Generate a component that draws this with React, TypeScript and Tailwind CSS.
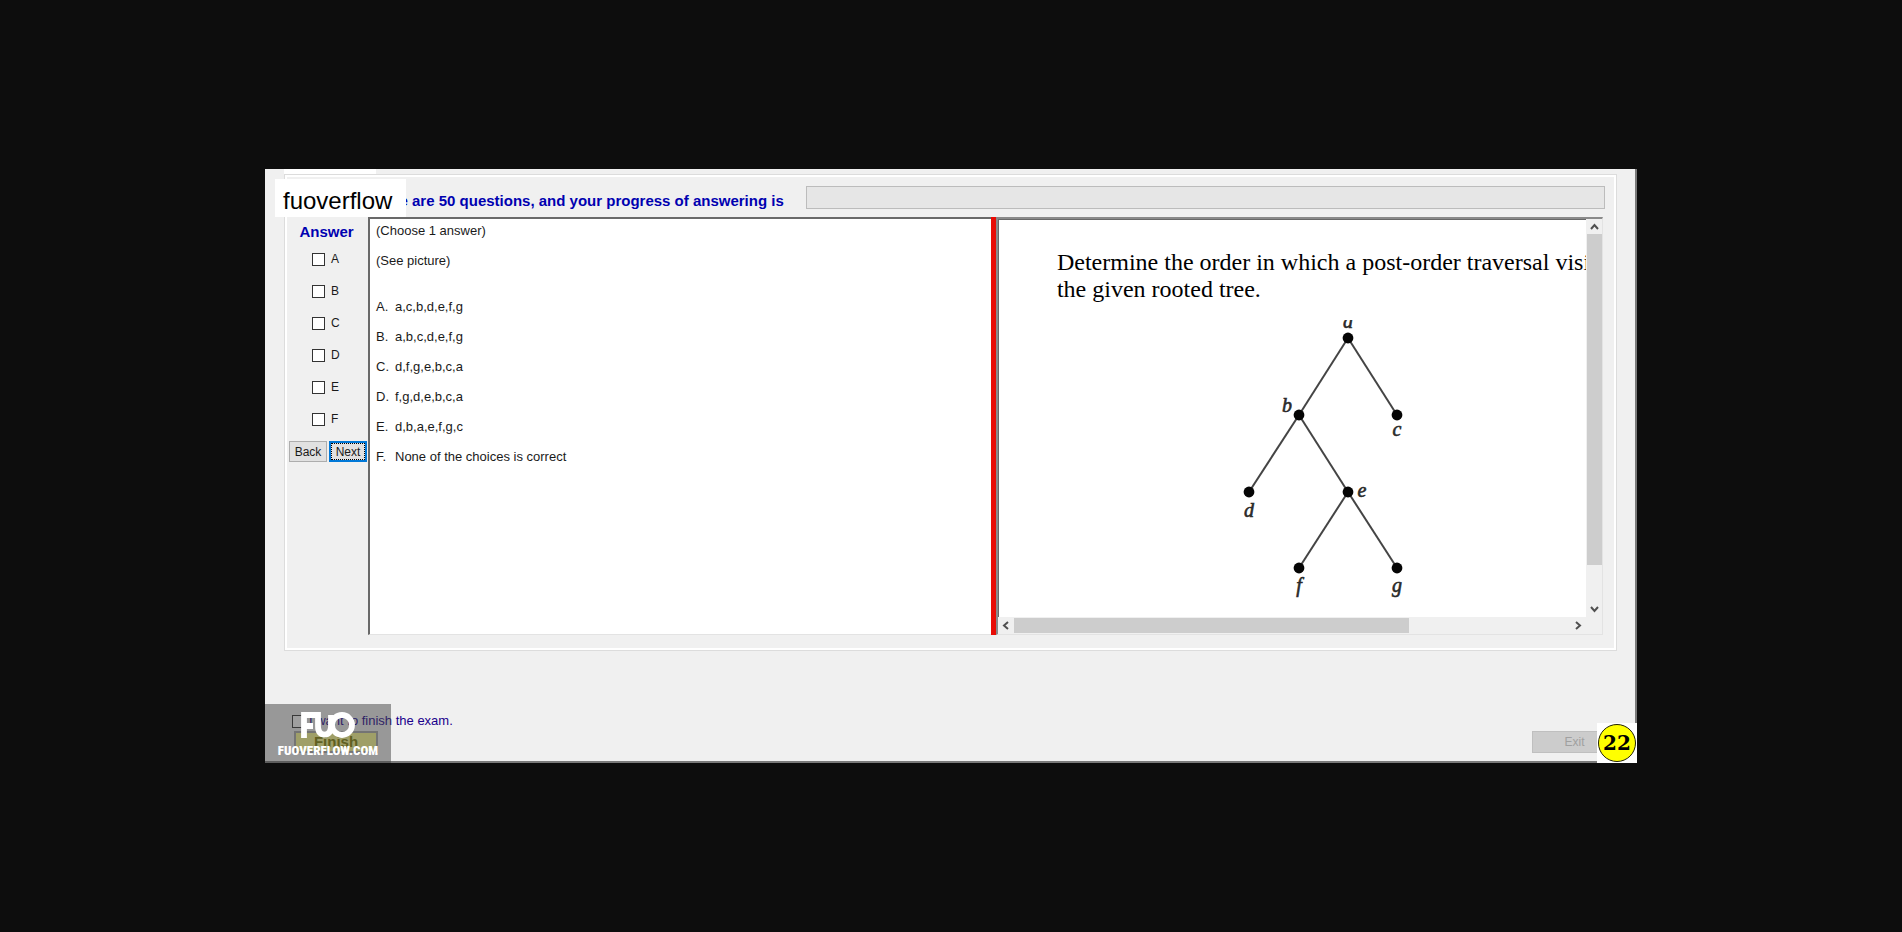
import React from "react";

const CHOICES = ["A", "B", "C", "D", "E", "F"];

const OPTIONS = [
  "a,c,b,d,e,f,g",
  "a,b,c,d,e,f,g",
  "d,f,g,e,b,c,a",
  "f,g,d,e,b,c,a",
  "d,b,a,e,f,g,c",
  "None of the choices is correct",
];

const NODES = [
  { id: "a", x: 116, y: 18, lx: 116, ly: 8 },
  { id: "b", x: 67, y: 95, lx: 55, ly: 92 },
  { id: "c", x: 165, y: 95, lx: 165, ly: 116 },
  { id: "d", x: 17, y: 172, lx: 17, ly: 197 },
  { id: "e", x: 116, y: 172, lx: 130, ly: 177 },
  { id: "f", x: 67, y: 248, lx: 67, ly: 272 },
  { id: "g", x: 165, y: 248, lx: 165, ly: 272 },
];

const EDGES = [
  [0, 1],
  [0, 2],
  [1, 3],
  [1, 4],
  [4, 5],
  [4, 6],
];

function Tree() {
  return (
    <svg width="200" height="283" viewBox="0 0 200 283" role="img" aria-label="Rooted tree">
      {EDGES.map(([from, to]) => (
        <line
          key={`${from}-${to}`}
          x1={NODES[from].x}
          y1={NODES[from].y}
          x2={NODES[to].x}
          y2={NODES[to].y}
          stroke="#444"
          strokeWidth="2"
        />
      ))}
      {NODES.map((n) => (
        <g key={n.id}>
          <circle cx={n.x} cy={n.y} r="5.4" fill="#050505" />
          <text
            x={n.lx}
            y={n.ly}
            textAnchor="middle"
            fontFamily="Liberation Serif, serif"
            fontStyle="italic"
            fontSize="20"
            fill="#2a2a2a"
            stroke="#2a2a2a"
            strokeWidth="0.6"
          >
            {n.id}
          </text>
        </g>
      ))}
    </svg>
  );
}

function Chevron({ d }: { d: string }) {
  return (
    <svg width="9" height="9" viewBox="0 0 9 9" fill="none" stroke="#505050" strokeWidth="2" aria-hidden="true">
      <path d={d} />
    </svg>
  );
}

const scrollButton = "flex size-[15px] shrink-0 items-center justify-center bg-[#f0f0f0]";

function PicturePane() {
  return (
    <section className="flex min-w-0 flex-[609] flex-col border-t-2 border-r border-b border-l-2 border-t-[#8a8a8a] border-r-[#e3e3e3] border-b-[#e3e3e3] border-l-[#8a8a8a] bg-[#f0f0f0]">
      <div className="flex min-h-0 flex-1">
        <div className="min-w-0 flex-1 overflow-hidden border-t border-l border-[#696969] bg-white pt-[29px] pl-[58px]">
          <p className="w-[620px] font-['Liberation_Serif',serif] text-[24px] leading-[27px] text-black">
            Determine the order in which a post-order traversal visits
            <br />
            the given rooted tree.
          </p>
          <div className="mt-[17px] ml-[175px]">
            <Tree />
          </div>
        </div>
        <div className="flex w-[16px] flex-col items-center">
          <button type="button" aria-label="Scroll up" className={scrollButton}>
            <Chevron d="M1 7 L4.500 3 L8 7" />
          </button>
          <div className="w-[15px] flex-1">
            <div className="h-[90%] bg-[#cdcdcd]" />
          </div>
          <button type="button" aria-label="Scroll down" className={scrollButton}>
            <Chevron d="M1 2 L4.500 6 L8 2" />
          </button>
        </div>
      </div>
      <div className="flex h-[17px] items-center pr-[17px] pl-px">
        <button type="button" aria-label="Scroll left" className={scrollButton}>
          <Chevron d="M6 1 L2 4.500 L6 8" />
        </button>
        <div className="h-[15px] flex-1">
          <div className="h-full w-[71%] bg-[#cdcdcd]" />
        </div>
        <button type="button" aria-label="Scroll right" className={scrollButton}>
          <Chevron d="M3 1 L7 4.500 L3 8" />
        </button>
      </div>
    </section>
  );
}

const checkbox = "size-[13px] shrink-0 appearance-none border border-[#333] bg-white";

export default function App() {
  return (
    <main className="flex min-h-screen items-center justify-center bg-[#0d0d0d] font-['Liberation_Sans',sans-serif] text-[13px] text-[#1a1a1a]">
      <div className="relative w-full max-w-[1372px] border-r-2 border-b-2 border-[#7a7a7a] bg-[#f0f0f0] pr-[18px] pl-[19px]">
        <div className="h-[5px] w-[92px] bg-white" />
        <div className="border border-[#dcdcdc] bg-white p-[2px]">
          <div className="bg-[#f0f0f0] pr-[9px] pb-[13px]">
            <header className="flex h-[40px] items-center gap-[22px] pl-[80px]">
              <h1 className="shrink-0 pt-2 text-[15px] leading-5 font-bold text-[#0000b0]">
                There are 50 questions, and your progress of answering is
              </h1>
              <div
                role="progressbar"
                aria-label="Answering progress"
                aria-valuenow={0}
                className="h-[23px] flex-1 border border-[#bcbcbc] bg-[#e6e6e6]"
              />
            </header>
            <div className="flex h-[418px] pr-[2px]">
              <fieldset className="flex w-[81px] shrink-0 flex-col">
                <legend className="w-full pt-1 pr-[2px] text-center text-[15px] leading-[22px] font-bold text-[#0000b0]">
                  Answer
                </legend>
                <div className="flex flex-col pl-[25px]">
                  {CHOICES.map((c) => (
                    <label key={c} className="flex h-8 items-center gap-[6px] text-[12px]">
                      <input type="checkbox" name="answer" value={c} className={checkbox} />
                      <span className="leading-4">{c}</span>
                    </label>
                  ))}
                </div>
                <div className="flex gap-[2px] pt-[6px] pl-[2px]">
                  <button type="button" className="h-[21px] w-[38px] border border-[#adadad] bg-[#e1e1e1] text-[12px]">
                    Back
                  </button>
                  <button
                    type="button"
                    className="h-[21px] w-[38px] border-2 border-[#0078d7] bg-[#e1e1e1] text-[12px] outline-1 -outline-offset-3 outline-dotted outline-black"
                  >
                    Next
                  </button>
                </div>
              </fieldset>
              <section className="min-w-0 flex-[620] border-t-2 border-b border-l-2 border-t-[#696969] border-b-[#e3e3e3] border-l-[#696969] bg-white pt-[2px] pl-[6px]">
                <p className="leading-5">(Choose 1 answer)</p>
                <p className="mt-[10px] leading-5">(See picture)</p>
                <ol className="mt-[21px] flex flex-col">
                  {OPTIONS.map((o, i) => (
                    <li key={o} className="flex h-[30px] items-center">
                      <span className="w-[19px]">{CHOICES[i]}.</span>
                      <span>{o}</span>
                    </li>
                  ))}
                </ol>
              </section>
              <div className="w-[5px] shrink-0 bg-[#e80c06]" />
              <PicturePane />
            </div>
          </div>
        </div>
        <footer className="flex items-end justify-between pt-[60px] pb-2 pl-2">
          <div className="flex flex-col">
            <label className="flex items-center gap-1 leading-5 text-[#1a008c]">
              <input type="checkbox" name="finish" className={checkbox} />
              <span>I want to finish the exam.</span>
            </label>
            <button
              type="button"
              className="ml-[2px] h-[22px] w-[84px] border-2 border-[#a8a8a8] bg-[#ffff90] text-[15px] leading-4 font-bold text-[#808000]"
            >
              Finish
            </button>
          </div>
          <button type="button" disabled className="h-[22px] w-[85px] border border-[#bfbfbf] bg-[#cccccc] text-[12px] text-[#a0a0a0]">
            Exit
          </button>
        </footer>

        <div className="absolute top-[10px] left-[10px] flex h-[38px] w-[131px] items-center bg-white pt-[6px] pl-2 text-[24px] text-black">
          fuoverflow
        </div>
        <div className="absolute -bottom-[2px] left-0 flex h-[59px] w-[126px] flex-col items-center bg-[#404040]/50 pt-2">
          <svg width="54" height="26" viewBox="0 0 54 26" fill="none" stroke="#fff" strokeWidth="5.8" aria-label="FUO">
            <path d="M3 26V3H16M3 14H12" />
            <path d="M17 0V14Q17 22.500 23.500 22.500Q30 22.500 30 14V3" />
            <circle cx="41" cy="13" r="10" />
          </svg>
          <span className="pt-[3px] font-['Roboto_Condensed','Liberation_Sans_Narrow','Liberation_Sans',sans-serif] text-[13px] leading-5 font-black text-white">
            FUOVERFLOW.COM
          </span>
        </div>
        <div className="absolute -right-[2px] -bottom-[2px] flex size-10 items-center justify-center bg-white">
          <div className="flex size-[38px] items-center justify-center rounded-full border border-[#222200] bg-[#ffff00] font-['DejaVu_Serif',serif] text-[20px] font-bold text-black">
            22
          </div>
        </div>
      </div>
    </main>
  );
}
